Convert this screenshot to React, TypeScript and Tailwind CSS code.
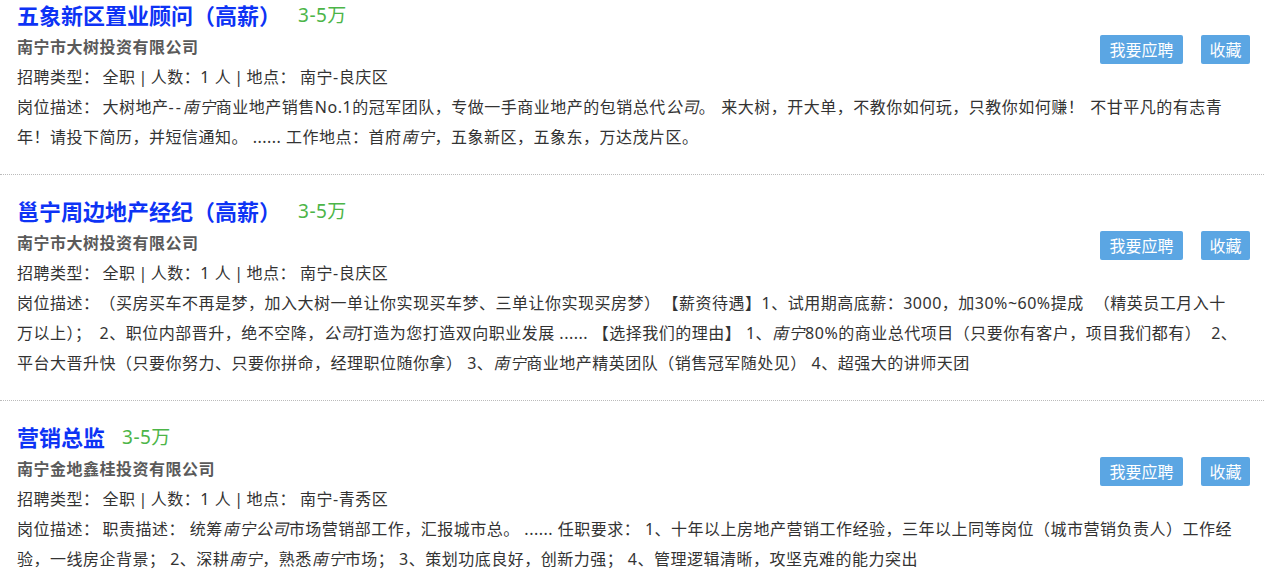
import type { ReactNode } from "react";

type Job = {
  title: string;
  salary: string;
  company: string;
  place: string;
  lines: ReactNode[];
};

const K = ({ children }: { children: ReactNode }) => <em className="italic">{children}</em>;

const jobs: Job[] = [
  {
    title: "五象新区置业顾问（高薪）",
    salary: "3-5万",
    company: "南宁市大树投资有限公司",
    place: "南宁-良庆区",
    lines: [
      <>
        岗位描述：<span className="ml-[3px]">大树地产<span className="tracking-[2px]">--</span></span>
        <K>南宁</K>商业地产销售No.1的冠军团队，专做一手商业地产的包销总代<K>公司</K>。
        <span className="ml-[6px]">来大树，开大单，不教你如何玩，只教你如何赚！</span>
        <span className="ml-[6px]">不甘平凡的有志青</span>
      </>,
      <>
        年！请投下简历，并短信通知。 ...... 工作地点：首府<K>南宁</K>，五象新区，五象东，万达茂片区。
      </>,
    ],
  },
  {
    title: "邕宁周边地产经纪（高薪）",
    salary: "3-5万",
    company: "南宁市大树投资有限公司",
    place: "南宁-良庆区",
    lines: [
      <>
        岗位描述：<span className="ml-[8px]">（买房买车不再是梦，加入大树一单让你实现买车梦、三单让你实现买房梦）</span>
        <span className="ml-[10px]">【薪资待遇】1、试用期高底薪：3000，加30%~60%提成</span>
        <span className="ml-[10px]">（精英员工月入十</span>
      </>,
      <>
        万以上）；<span className="ml-[8px]">2、职位内部晋升，绝不空降，</span>
        <K>公司</K>打造为您打造双向职业发展 ...... 【选择我们的理由】 1、<K>南宁</K>80%的商业总代项目（只要你有客户，项目我们都有）
        <span className="ml-[10px]">2、</span>
      </>,
      <>
        平台大晋升快（只要你努力、只要你拼命，经理职位随你拿） 3、<K>南宁</K>商业地产精英团队（销售冠军随处见） 4、超强大的讲师天团
      </>,
    ],
  },
  {
    title: "营销总监",
    salary: "3-5万",
    company: "南宁金地鑫桂投资有限公司",
    place: "南宁-青秀区",
    lines: [
      <>
        岗位描述：<span className="ml-[3px]">职责描述： 统筹</span>
        <K>南宁公司</K>市场营销部工作，汇报城市总。 ...... 任职要求： 1、十年以上房地产营销工作经验，三年以上同等岗位（城市营销负责人）工作经
      </>,
      <>
        验，一线房企背景； 2、深耕<K>南宁</K>，熟悉<K>南宁</K>市场； 3、策划功底良好，创新力强； 4、管理逻辑清晰，攻坚克难的能力突出
      </>,
    ],
  },
];

export default function App() {
  return (
    <div className="w-[1264px] bg-white font-['Noto_Sans','Noto_Sans_CJK_SC',sans-serif] text-[16px] text-[#333]">
      {jobs.map((job, i) => (
        <div
          key={i}
          className={`border-b border-dotted border-[#bbb] pl-[17px] pr-[14px] pb-[22px] ${i === 0 ? "pt-0" : "pt-[21px]"}`}
        >
          <div className="flex h-[30px] items-center">
            <span className="text-[22px] font-bold leading-[30px] text-[#0d33f5]">{job.title}</span>
            <span className="ml-[17px] text-[19px] leading-[30px] tracking-[0.5px] text-[#4cb548]">{job.salary}</span>
          </div>
          <div className="mt-[2px] flex h-[30px] items-start justify-between">
            <span className="text-[16px] font-bold leading-[30px] tracking-[0.5px] text-[#5a5a5a]">{job.company}</span>
            <div className="mt-[3px] flex gap-[18px]">
              <button className="flex h-[29px] w-[83px] items-center justify-center rounded-[2px] bg-[#5ba6e3] text-[16px] text-white">
                我要应聘
              </button>
              <button className="flex h-[29px] w-[49px] items-center justify-center rounded-[2px] bg-[#5ba6e3] text-[16px] text-white">
                收藏
              </button>
            </div>
          </div>
          <div className="whitespace-nowrap leading-[30px] tracking-[0.5px]">
            招聘类型：<span className="ml-[3px]">全职</span>
            <span className="mx-[3px]">|</span>人数：1 人<span className="mx-[3px]">|</span>地点：
            <span className="ml-[4px]">{job.place}</span>
          </div>
          {job.lines.map((line, j) => (
            <div key={j} className="whitespace-nowrap leading-[30px] tracking-[0.5px]">
              {line}
            </div>
          ))}
        </div>
      ))}
    </div>
  );
}
